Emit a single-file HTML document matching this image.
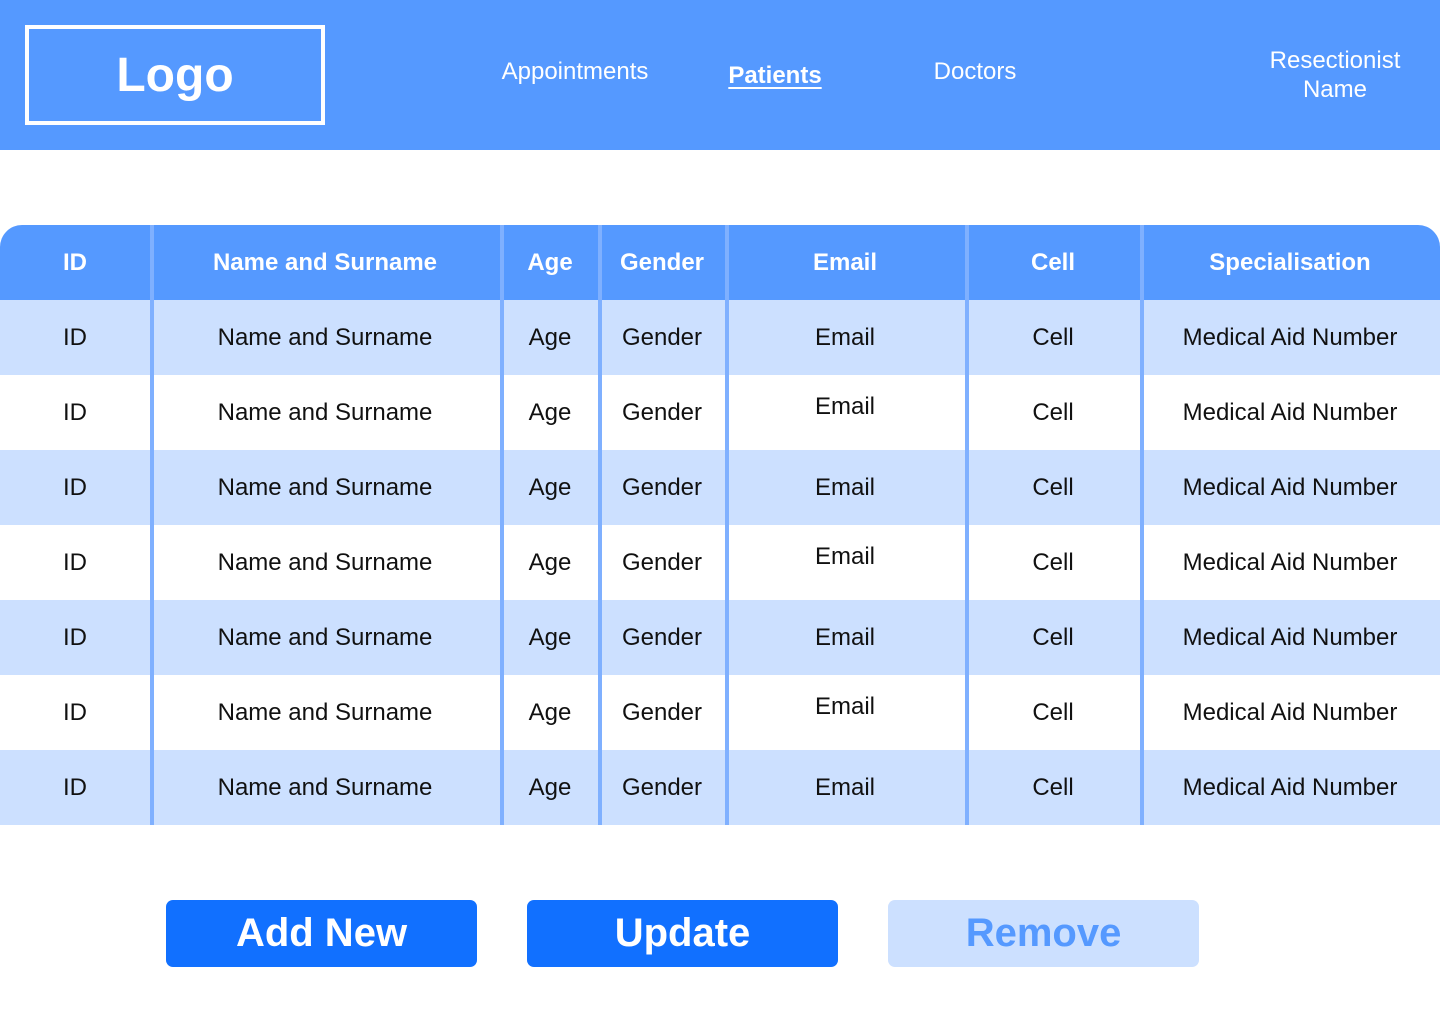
<!DOCTYPE html>
<html><head><meta charset="utf-8"><style>
*{margin:0;padding:0;box-sizing:border-box}
body{width:1440px;height:1024px;background:#fff;font-family:"Liberation Sans",sans-serif;position:relative;overflow:hidden}
.top{position:absolute;left:0;top:0;width:1440px;height:150px;background:#5599ff;color:#fff}
.logo{position:absolute;left:25px;top:25px;width:300px;height:100px;border:4px solid #fff;display:flex;align-items:center;justify-content:center;font-weight:bold;font-size:48px}
.nav{position:absolute;font-size:24px;transform:translateX(-50%);white-space:nowrap;text-align:center}
.table{position:absolute;left:0;top:225px;width:1440px}
.row{display:flex;height:75px;align-items:center;font-size:24px;color:#111}
.row>div{text-align:center}
.hd{background:#5599ff;color:#fff;font-weight:bold;border-radius:22px 22px 0 0}
.lt{background:#cce0ff}
.c1{width:150px}.c2{width:350px}.c3{width:100px}.c4{width:124px}.c5{width:242px}.c6{width:174px}.c7{width:300px}
.w .c5{position:relative;top:-6px}
.dv{position:absolute;top:225px;height:600px;width:4px;background:#7fb0ff}
.btn{position:absolute;top:900px;width:311px;height:67px;border-radius:7px;display:flex;align-items:center;justify-content:center;font-weight:bold;font-size:40px;color:#fff;background:#1170ff}
</style></head><body>
<div class="top">
<div class="logo">Logo</div>
<div class="nav" style="left:575px;top:58px">Appointments</div>
<div class="nav" style="left:775px;top:62px;font-weight:bold;text-decoration:underline;text-underline-offset:4px">Patients</div>
<div class="nav" style="left:975px;top:58px">Doctors</div>
<div class="nav" style="left:1335px;top:46px;line-height:29px">Resectionist<br>Name</div>
</div>
<div class="table">
<div class="row hd"><div class="c1">ID</div><div class="c2">Name and Surname</div><div class="c3">Age</div><div class="c4">Gender</div><div class="c5">Email</div><div class="c6">Cell</div><div class="c7">Specialisation</div></div>
<div class="row lt"><div class="c1">ID</div><div class="c2">Name and Surname</div><div class="c3">Age</div><div class="c4">Gender</div><div class="c5">Email</div><div class="c6">Cell</div><div class="c7">Medical Aid Number</div></div>
<div class="row w"><div class="c1">ID</div><div class="c2">Name and Surname</div><div class="c3">Age</div><div class="c4">Gender</div><div class="c5">Email</div><div class="c6">Cell</div><div class="c7">Medical Aid Number</div></div>
<div class="row lt"><div class="c1">ID</div><div class="c2">Name and Surname</div><div class="c3">Age</div><div class="c4">Gender</div><div class="c5">Email</div><div class="c6">Cell</div><div class="c7">Medical Aid Number</div></div>
<div class="row w"><div class="c1">ID</div><div class="c2">Name and Surname</div><div class="c3">Age</div><div class="c4">Gender</div><div class="c5">Email</div><div class="c6">Cell</div><div class="c7">Medical Aid Number</div></div>
<div class="row lt"><div class="c1">ID</div><div class="c2">Name and Surname</div><div class="c3">Age</div><div class="c4">Gender</div><div class="c5">Email</div><div class="c6">Cell</div><div class="c7">Medical Aid Number</div></div>
<div class="row w"><div class="c1">ID</div><div class="c2">Name and Surname</div><div class="c3">Age</div><div class="c4">Gender</div><div class="c5">Email</div><div class="c6">Cell</div><div class="c7">Medical Aid Number</div></div>
<div class="row lt"><div class="c1">ID</div><div class="c2">Name and Surname</div><div class="c3">Age</div><div class="c4">Gender</div><div class="c5">Email</div><div class="c6">Cell</div><div class="c7">Medical Aid Number</div></div>
</div>
<div class="dv" style="left:150px"></div>
<div class="dv" style="left:500px"></div>
<div class="dv" style="left:598px"></div>
<div class="dv" style="left:725px"></div>
<div class="dv" style="left:965px"></div>
<div class="dv" style="left:1140px"></div>
<div class="btn" style="left:166px">Add New</div>
<div class="btn" style="left:527px">Update</div>
<div class="btn" style="left:888px;background:#cce0ff;color:#5599ff">Remove</div>
</body></html>
